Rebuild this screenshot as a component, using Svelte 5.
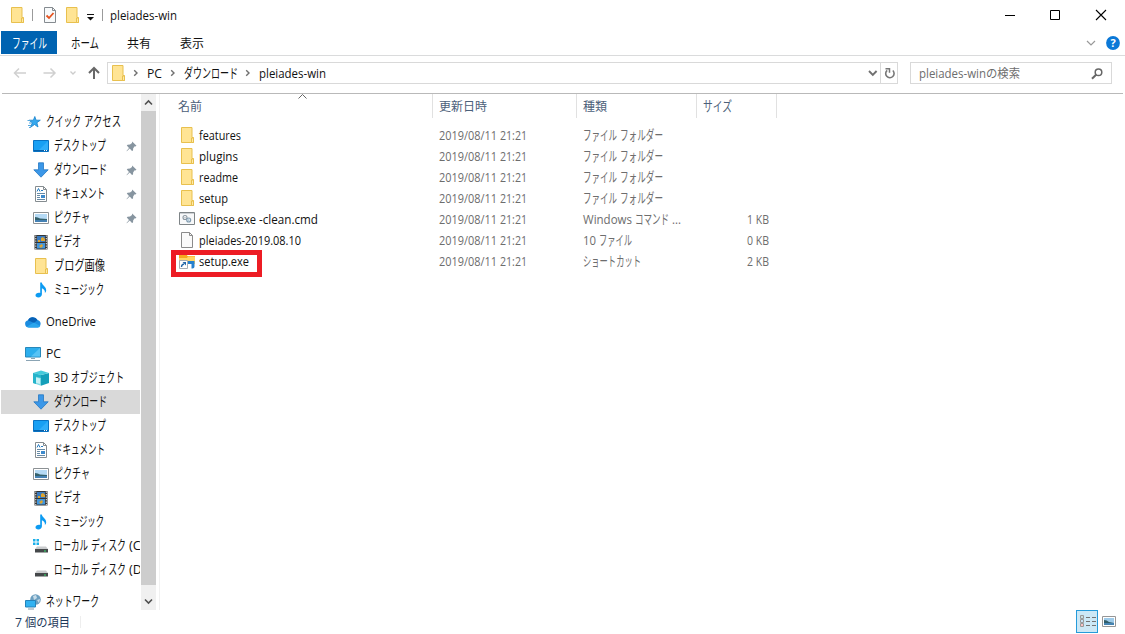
<script>
  const quick = [
    { icon: 'desktop', t: [['デスクトップ', 52]], pin: true },
    { icon: 'down', t: [['ダウンロード', 53]], pin: true },
    { icon: 'doc', t: [['ドキュメント', 51]], pin: true },
    { icon: 'picture', t: [['ピクチャ', 36]], pin: true },
    { icon: 'video', t: [['ビデオ', 27]] },
    { icon: 'folder', t: [['ブログ画像', 51]] },
    { icon: 'music', t: [['ミュージック', 50]] }
  ];
  const pc = [
    { icon: 'cube', t: [['3D', 14], ['オブジェクト', 53]] },
    { icon: 'down', t: [['ダウンロード', 53]], selected: true },
    { icon: 'desktop', t: [['デスクトップ', 52]] },
    { icon: 'doc', t: [['ドキュメント', 51]] },
    { icon: 'picture', t: [['ピクチャ', 36]] },
    { icon: 'video', t: [['ビデオ', 27]] },
    { icon: 'music', t: [['ミュージック', 50]] },
    { icon: 'diskwin', t: [['ローカル', 34], ['ディスク', 35], ['(C', 12]] },
    { icon: 'disk', t: [['ローカル', 34], ['ディスク', 35], ['(D', 13]] }
  ];
  const groups = [
    { icon: 'star', t: [['クイック', 35], ['アクセス', 37]], items: quick },
    { icon: 'cloud', t: [['OneDrive', 50]], items: [] },
    { icon: 'pc', t: [['PC', 15]], items: pc },
    { icon: 'network', t: [['ネットワーク', 53]], items: [] }
  ];
  const folderType = [['ファイル', 34], ['フォルダー', 43]];
  const files = [
    { icon: 'folder', n: [['features', 42]], type: folderType },
    { icon: 'folder', n: [['plugins', 39]], type: folderType },
    { icon: 'folder', n: [['readme', 39]], type: folderType },
    { icon: 'folder', n: [['setup', 29]], type: folderType },
    { icon: 'cmd', n: [['eclipse.exe', 57], ['-clean.cmd', 59]], type: [['Windows', 49], ['コマンド', 34], ['...', 9]], size: '1 KB' },
    { icon: 'file', n: [['pleiades-2019.08.10', 102]], type: [['10', 13], ['ファイル', 33]], size: '0 KB' },
    { icon: 'shortcut', n: [['setup.exe', 50]], type: [['ショートカット', 58]], size: '2 KB', marked: true }
  ];
  const kana = (s) => /[\u30a0-\u30ff]/.test(s);
</script>

{#snippet label(parts)}
  <span class="label">
    {#each parts as [text, w]}
      <svg width={w} height="16"><text class:kana={kana(text)} x="0" y="12.5" textLength={w} lengthAdjust="spacingAndGlyphs">{text}</text></svg>
    {/each}
  </span>
{/snippet}

{#snippet drive()}
  <path d="M4 8.500h9l2 2.500H2z" fill="#c9cbcd" />
  <path d="M2 11h13v3.500H2z" fill="#45484a" />
  <path d="M11 12.500h2v1h-2z" fill="#35e06a" />
{/snippet}

{#snippet icon(name)}
  <svg class="icon" width="16" height="16" viewBox="0 0 16 16">
    {#if name === 'folder'}
      <path d="M2.500.5h10.500v10h1.500v5h-12z" fill="#ffe494" stroke="#e8c04e" />
      <path d="M12.500 15.500v-4.500h2v4.500z" fill="#ffe9a6" stroke="#e8c04e" />
    {:else if name === 'star'}
      <path d="M9.800 2.500l1.300 3.700h4.200l-3.400 2.500 1.100 4.300-3.500-2.500-3.800 2.700 1.500-4.400L4 6.200h4.400z" fill="#35a8ee" stroke="#1683cd" stroke-width=".8" />
      <path d="M2.500 6.500h3M4 9h2M3 11.500h3M4 13.500h2" stroke="#56a9df" />
    {:else if name === 'desktop'}
      <path d="M.5 2.500h15v11H.5z" fill="#18a0f4" stroke="#0873c4" />
      <path d="M15 3v9L6 12z" fill="#30aefa" />
      <path d="M1 12.500h14" stroke="#075fa8" /><path d="M11 12.500h1M13 12.500h1" stroke="#fff" />
    {:else if name === 'down'}
      <path d="M5.500.8h5v7h4.700L8 15.200.8 7.800h4.700z" fill="#3b97e8" stroke="#2577c3" stroke-width=".8" />
    {:else if name === 'doc'}
      <path d="M2.500.5h8l3 3v12h-11z" fill="#fff" stroke="#858c90" />
      <path d="M10.500.5v3h3" fill="none" stroke="#858c90" />
      <path d="M4 5.500l1.500-3L7 5.500M8 4.500h2" fill="none" stroke="#257bc0" />
      <path d="M4 7.500h8M4 9.500h3M4 11.500h3M4 13.500h8" stroke="#668aa6" /><path d="M8 9h4v3H8z" fill="#3d8acc" />
    {:else if name === 'picture'}
      <path d="M.5 2.500h15v11H.5z" fill="#fff" stroke="#8c9194" />
      <path d="M2 4h12v8H2z" fill="#b5daf5" /><path d="M2 7q3 0 5 1.500l7 .5v1H2z" fill="#34616c" /><path d="M2 10h12v2H2z" fill="#4581b3" />
    {:else if name === 'video'}
      <path d="M1.500 1h13v14.500h-13z" fill="#333638" /><path d="M4 2h8v6H4z" fill="#3979bd" /><path d="M4 9h8v5.500H4z" fill="#4296dd" />
      <path d="M8 4l2-1 2 2v2H8zM5 6h2v2H5zM6 12l3-2 1 2-2 2z" fill="#dda42f" /><path d="M2.800 1.500v14M13.300 1.500v14" stroke="#eee" stroke-dasharray="1.300 1.200" />
    {:else if name === 'music'}
      <path d="M7.200.5h1.600c.3 3 4.700 4 4.400 8.200-.1 1-.6 1.700-1.300 2.300.3-2.800-1-3.800-3-4.700v6c0 2-1.500 3.200-3.600 3.200-1.700 0-2.800-.9-2.800-2.200 0-1.800 2.300-2.900 4.700-2.300z" fill="#0c9bf2" />
    {:else if name === 'cloud'}
      <path d="M4 13.500A3.700 3.700 0 0 1 3 6.200 5.300 5.300 0 0 1 12.500 6 3.900 3.900 0 0 1 13 13.500z" fill="#1b8ce0" />
      <path d="M3 6.200A5.300 5.300 0 0 1 12.500 6L9 9z" fill="#0861b6" /><path d="M2 12.500l7-4 6.200 3.500q-.7 1.500-2.200 1.500H4q-1.300 0-2-1z" fill="#29a5ed" />
    {:else if name === 'pc'}
      <path d="M.5 1.500h15v9.500H.5z" fill="#2daeed" stroke="#2788ba" /><path d="M15 2v8.500L6 10.500z" fill="#58c3f5" /><path d="M6 12.500h4M1 14.500h14" stroke="#8ba4b4" />
    {:else if name === 'cube'}
      <path d="M0 3l8 2v10.700L0 13z" fill="#7ed8e4" /><path d="M8 5l8-2v10l-8 2.700z" fill="#149fba" /><path d="M0 3L8 .5 16 3 8 5z" fill="#45cadb" /><path d="M0 3l8 2v3L3 6.800V14L0 13z" fill="#25b4cb" /><path d="M3 7.500l4 1v5.500l-4-1.200z" fill="#c7f2f6" />
    {:else if name === 'disk'}
      {@render drive()}
    {:else if name === 'diskwin'}
      <path d="M0 1h2.500v2.500H0zM3.500 1H6v2.500H3.500zM0 4.500h2.500V7H0zM3.500 4.500H6V7H3.500z" fill="#1bafe9" />
      {@render drive()}
    {:else if name === 'network'}
      <circle cx="10.500" cy="5.500" r="5.300" fill="#6c9fc0" /><path d="M8 2l3-1 1 3-3 2zM12 6l3-1-1 4z" fill="#c7dce8" />
      <path d="M.5 6.500h10v6.500H.5z" fill="#31b2f1" stroke="#2582b8" /><path d="M3 15h6" stroke="#7d98a8" />
    {:else if name === 'cmd'}
      <path d="M.5 1.500h15v12H.5z" fill="#f7f8f9" stroke="#7e8487" /><path d="M1 2.500h14" stroke="#ccd0d3" />
      <circle cx="6" cy="6.500" r="2" fill="none" stroke="#8b969f" stroke-width="1.100" /><circle cx="6" cy="6.500" r=".5" fill="#7e8b95" />
      <circle cx="9.700" cy="9" r="2" fill="#dceaf3" stroke="#7f9aae" stroke-width="1.100" /><circle cx="9.700" cy="9" r=".5" fill="#7390a5" />
    {:else if name === 'file'}
      <path d="M2.500.5h8l3 3v12h-11z" fill="#fafafa" stroke="#8b8b8b" /><path d="M10.500.5v3h3" fill="none" stroke="#8b8b8b" />
    {:else if name === 'shortcut'}
      <path d="M0 0h7l1.500 3H16v8H0z" fill="#f6a81e" /><path d="M0 5h8l1-1.500h7V11H0z" fill="#ffd566" />
      <path d="M9 8h6.500v5.500q0 2-2 2h-1V11H9z" fill="#2681cf" />
      <path d="M.5 7.500h8v8h-8z" fill="#fff" stroke="#a7adb3" /><path d="M2.500 14q0-2.500 2.500-3" fill="none" stroke="#2467a7" stroke-width="1.300" /><path d="M3.500 9h3.500v3.500z" fill="#2467a7" />
    {/if}
  </svg>
{/snippet}

{#snippet chevron()}
  <svg class="chev" width="6" height="8"><path d="M1.200 1.200L4 4 1.200 6.800" fill="none" stroke="#707070" stroke-width="1.400" /></svg>
{/snippet}

<div class="window">
  <header class="title">
    {@render icon('folder')}
    <i class="sep first"></i>
    <svg class="props" width="14" height="16"><path d="M1.500.5h8l3 3v12h-11z" fill="#f8fafb" stroke="#858b90" /><path d="M9.500.5v3h3" fill="none" stroke="#858b90" /><path d="M3.500 8.500L6 11l4.500-5" fill="none" stroke="#e5521f" stroke-width="1.800" /></svg>
    <span class="qa">{@render icon('folder')}</span>
    <svg class="drop" width="8" height="8"><path d="M0 1.500h7" stroke="#111" /><path d="M0 4h7L3.500 7.500z" fill="#111" /></svg>
    <i class="sep"></i>
    <span class="name">{@render label([['pleiades-win', 67]])}</span>
    <svg class="controls" width="104" height="12"><path d="M0 6.500h10" stroke="#000" /><path d="M45.500 1.500h9v9h-9z" fill="none" stroke="#000" /><path d="M91 1l10 10M101 1L91 11" stroke="#000" stroke-width="1.100" /></svg>
  </header>

  <nav class="tabs">
    <div class="tab active">{@render label([['ファイル', 35]])}</div>
    <div class="tab home">{@render label([['ホーム', 28]])}</div>
    <div class="tab share">{@render label([['共有', 24]])}</div>
    <div class="tab view">{@render label([['表示', 24]])}</div>
    <svg class="help" width="34" height="14"><path d="M1 5l4 4 4-4" fill="none" stroke="#999" stroke-width="1.200" /><circle cx="27" cy="7" r="6.900" fill="#0b78d7" /><text x="27" y="11" text-anchor="middle" font-weight="bold">?</text></svg>
  </nav>

  <div class="address">
    <svg class="arrows" width="90" height="16">
      <g fill="none" stroke-width="1.500"><path d="M13 8H1.500M6 3.500L1.500 8 6 12.500M30.500 8H42M37.500 3.500L42 8l-4.500 4.500" stroke="#d0d0d0" /><path d="M57.500 6.500L60 9l2.500-2.500" stroke="#ccc" stroke-width="1.300" /><path d="M81 14V3M76 8l5-5 5 5" stroke="#686868" stroke-width="2" /></g>
    </svg>
    <div class="path">
      {@render icon('folder')}
      {@render chevron()}
      <span class="p1">{@render label([['PC', 15]])}</span>
      {@render chevron()}
      <span class="p2">{@render label([['ダウンロード', 54]])}</span>
      {@render chevron()}
      <span class="p3">{@render label([['pleiades-win', 67]])}</span>
      <svg class="pathdrop" width="10" height="8"><path d="M1 2l3.800 3.800L8.600 2" fill="none" stroke="#707070" stroke-width="1.900" /></svg>
      <div class="refresh"><svg width="12" height="13"><path d="M3.200 3.300A4.200 4.200 0 1 0 8.800 3.500" fill="none" stroke="#777" stroke-width="1.600" /><path d="M1.500 1.800h4v4" fill="none" stroke="#777" stroke-width="1.500" /></svg></div>
    </div>
    <div class="search">
      {@render label([['pleiades-win', 67]])}<span class="jp">{@render label([['の検索', 34]])}</span>
      <svg class="glass" width="13" height="13"><circle cx="7.500" cy="5.200" r="3.300" fill="none" stroke="#666" stroke-width="1.500" /><path d="M5.300 7.500L1 11.800" stroke="#666" stroke-width="2" /></svg>
    </div>
  </div>

  <main>
    <aside>
      {#each groups as g}
        <section>
          <div class="row head">{@render icon(g.icon)}{@render label(g.t)}</div>
          {#each g.items as it}
            <div class="row" class:selected={it.selected}>
              {@render icon(it.icon)}{@render label(it.t)}
              {#if it.pin}
                <svg class="pin" width="11" height="11"><path d="M6.200.5L10.500 4.800 9.300 5.500 8.700 5.200 7.200 7.200 7 9.500 6 10 3.700 7.600.8 10.300.5 10 3 6.900.8 4.500 1.600 3.700 4 3.600 6 2z" fill="#8795a0" /></svg>
              {/if}
            </div>
          {/each}
        </section>
      {/each}
    </aside>
    <div class="scroll">
      <svg width="15" height="17"><path d="M4 10.500L7.500 7l3.500 3.500" fill="none" stroke="#505050" stroke-width="1.600" /></svg>
      <div class="thumb"></div>
      <svg width="15" height="24"><path d="M4 14.500l3.500 3.500 3.500-3.500" fill="none" stroke="#505050" stroke-width="1.600" /></svg>
    </div>
    <div class="files">
      <div class="grid header">
        <div class="c1">{@render label([['名前', 24]])}<svg class="sort" width="9" height="5"><path d="M.5 4.500l4-4 4 4" fill="none" stroke="#666" /></svg></div>
        <div>{@render label([['更新日時', 48]])}</div>
        <div>{@render label([['種類', 24]])}</div>
        <div>{@render label([['サイズ', 29]])}</div>
      </div>
      {#each files as f}
        <div class="grid file">
          <div class="c1">{@render icon(f.icon)}{@render label(f.n)}{#if f.marked}<i class="mark"></i>{/if}</div>
          <div>{@render label([['2019/08/11', 58], ['21:21', 27]])}</div>
          <div class="type">{@render label(f.type)}</div>
          <div class="size">{#if f.size}{@render label([[f.size, 22]])}{/if}</div>
        </div>
      {/each}
    </div>
  </main>

  <footer>
    {@render label([['7', 7], ['個の項目', 45]])}
    <i class="fsep"></i>
    <div class="views">
      <div class="details"><svg width="20" height="20"><path d="M3.500 4.500h3v3h-3zM3.500 8.500h3v3h-3zM3.500 12.500h3v3h-3z" fill="#fff" stroke="#999" /><path d="M9 6.500h4M15 6.500h4M9 10.500h4M15 10.500h4M9 14.500h4M15 14.500h4" stroke="#737373" /><path d="M4.500 5.500h1v1h-1z" fill="#267f84" /><path d="M4.500 9.500h1v1h-1z" fill="#238adb" /><path d="M4.500 13.500h1v1h-1z" fill="#e81123" /></svg></div>
      <svg width="14" height="11"><path d="M.5.5h13v10H.5z" fill="#fff" stroke="#969696" /><path d="M2 2h10v7H2z" fill="#9ecbea" /><path d="M2 4q3 0 5 2l5 1v1H2z" fill="#315d69" /><path d="M2 7h10v2H2z" fill="#4583b2" /></svg>
    </div>
  </footer>
</div>

<style>
  :global(body) { background: #fff; overflow: hidden; }
  .window { width: 1125px; height: 634px; box-sizing: border-box; display: flex; flex-direction: column; font: 12px "Open Sans", "Noto Sans CJK JP", sans-serif; color: #111; }
  svg { display: block; flex: none; }
  text { fill: currentColor; }
  .kana { font-size: 13.5px; }
  .label { display: flex; gap: 3px; flex: none; }
  .label svg { overflow: visible; }
  .title { height: 31px; display: flex; align-items: center; padding: 0 0 1px 9px; box-sizing: border-box; }
  .sep { width: 1px; height: 12px; background: #9b9b9b; }
  .sep.first { margin: 0 10px 0 7px; }
  .qa { margin-left: 7px; }
  .drop { margin: 3px 7px 0 7px; }
  .name { margin-left: 7px; }
  .controls { margin: 0 16px 0 auto; }
  .tabs { height: 24px; display: flex; align-items: center; padding-left: 1px; border-bottom: 1px solid #dadbdc; }
  .active { width: 56px; height: 23px; margin-bottom: 1px; background: #0063b1; color: #fff; display: flex; align-items: center; justify-content: center; }
  .home { margin-left: 14px; }
  .share { margin-left: 28px; }
  .view { margin-left: 29px; }
  .help { margin: 0 5px 0 auto; }
  .help text { fill: #fff; font-size: 11px; }
  .address { height: 38px; display: flex; align-items: center; padding: 0 11px 3px 11px; box-sizing: border-box; border-bottom: 1px solid #b9b9b9; margin: 0 2px 0 2px; }
  .path { width: 791px; height: 22px; margin-left: 4px; border: 1px solid #d9d9d9; box-sizing: border-box; display: flex; align-items: center; padding-left: 2px; }
  .path > .icon { margin-bottom: 1px; }
  .path .chev:nth-of-type(2) { margin-left: 7px; }
  .p1 { margin: 0 8px 0 8px; }
  .p2 { margin: 0 7px 0 8px; }
  .p3 { margin-left: 8px; }
  .pathdrop { margin-left: auto; margin-right: 2px; }
  .refresh { border-left: 1px solid #d9d9d9; height: 20px; width: 16px; display: flex; align-items: center; justify-content: center; }
  .refresh svg { margin-left: 2px; }
  .search { width: 202px; height: 22px; box-sizing: border-box; border: 1px solid #d9d9d9; margin-left: 12px; display: flex; align-items: center; padding: 0 7px 0 8px; color: #6d6d6d; }
  .glass { margin-left: auto; }
  main { height: 516px; display: flex; flex: none; }
  aside { width: 139px; height: 500px; padding: 16px 0 0 1px; overflow: hidden; display: flex; flex-direction: column; gap: 8px; margin-right: 1px; }
  .row { height: 24px; display: flex; align-items: center; gap: 5px; padding-left: 32px; position: relative; overflow: hidden; flex: none; }
  .row.head { padding-left: 24px; }
  .row > .label { margin-bottom: 2px; }
  .row.selected { background: #d9d9d9; }
  .pin { position: absolute; left: 125px; top: 7px; }
  .scroll { width: 15px; background: #f0f0f0; display: flex; flex-direction: column; }
  .thumb { background: #cdcdcd; height: 474px; }
  .files { margin-left: 3px; border-left: 1px solid #f1f1f1; flex: 1; }
  .grid { display: grid; grid-template-columns: 273px 144px 120px 80px; }
  .header { height: 24px; color: #4c607a; margin-bottom: 7px; }
  .header > div { border-right: 1px solid #e1e1e1; display: flex; align-items: center; padding-left: 6px; }
  .header > .c1 { padding-left: 18px; position: relative; }
  .sort { position: absolute; left: 138px; top: 0; }
  .file { height: 21px; color: #6d6d6d; }
  .file > div { display: flex; align-items: center; padding-left: 6px; }
  .file .label { margin-bottom: 2px; }
  .file > .c1 { padding-left: 19px; gap: 4px; color: #111; position: relative; }
  .file > .c1 .icon { margin-top: -1px; }
  .file > .size { justify-content: flex-end; padding: 0 8px 0 0; }
  .mark { position: absolute; left: 11px; top: -1px; width: 81px; height: 17px; border: 5px solid #ed1c24; }
  footer { flex: 1; display: flex; align-items: center; padding: 0 9px 1px 15px; color: #1e395b; }
  .fsep { width: 1px; height: 12px; background: #eee; margin-left: 10px; }
  .views { margin-left: auto; display: flex; align-items: center; gap: 4px; }
  .details { width: 20px; height: 21px; background: #cce8f6; border: 1px solid #269bda; }
</style>
